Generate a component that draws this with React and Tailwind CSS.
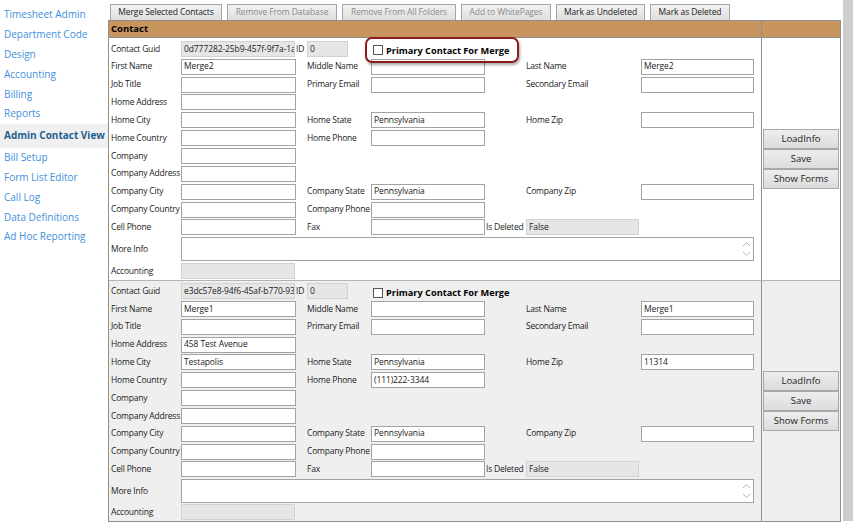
import React from 'react';

const navItems = [
  'Timesheet Admin',
  'Department Code',
  'Design',
  'Accounting',
  'Billing',
  'Reports',
  'Admin Contact View',
  'Bill Setup',
  'Form List Editor',
  'Call Log',
  'Data Definitions',
  'Ad Hoc Reporting',
];

const toolbar = [
  { label: 'Merge Selected Contacts', w: 'w-[112px]', on: true },
  { label: 'Remove From Database', w: 'w-[110px]', on: false },
  { label: 'Remove From All Folders', w: 'w-[114px]', on: false },
  { label: 'Add to WhitePages', w: 'w-[90px]', on: false },
  { label: 'Mark as Undeleted', w: 'w-[89px]', on: true },
  { label: 'Mark as Deleted', w: 'w-[80px]', on: true },
];

const contacts = [
  {
    guid: '0d777282-25b9-457f-9f7a-1a',
    first: 'Merge2',
    last: 'Merge2',
    address: '',
    city: '',
    zip: '',
    phone: '',
    bg: 'bg-white',
    pad: 'pt-[2px]',
    infoH: 'h-[26px]',
  },
  {
    guid: 'e3dc57e8-94f6-45af-b770-93',
    first: 'Merge1',
    last: 'Merge1',
    address: '458 Test Avenue',
    city: 'Testapolis',
    zip: '11314',
    phone: '(111)222-3344',
    bg: 'bg-[#efefef] border-t border-[#b4b4b4]',
    pad: 'pt-[1px]',
    infoH: 'h-[25px]',
  },
];

function Box({ value = '', w = 'w-[115px]', gray = false }) {
  return (
    <div
      className={`${w} shrink-0 h-[16px] border flex items-center px-[2px] overflow-hidden whitespace-nowrap text-[8.5px] tracking-[-0.1px] text-[#222] ${
        gray ? 'bg-[#e6e6e6] border-[#d2d2d2]' : 'bg-white border-[#a3a3a3]'
      }`}
    >
      {value}
    </div>
  );
}

function Label({ children, w }) {
  return (
    <div className={`${w} shrink-0 whitespace-nowrap text-[8.5px] tracking-[-0.2px] text-[#222]`}>{children}</div>
  );
}

function Row({ a, av, b, bv, c, cv, isDeleted = false }) {
  return (
    <div className="h-[17.85px] flex items-center">
      <Label w="w-[70px]">{a}</Label>
      <Box value={av} />
      <div className="w-[11px] shrink-0" />
      {b && (
        <>
          <Label w="w-[64px]">{b}</Label>
          <Box value={bv} w="w-[114px]" />
        </>
      )}
      {isDeleted && (
        <>
          <div className="w-[41px] shrink-0 pl-[1px] text-[8.5px] tracking-[-0.2px] text-[#222] whitespace-nowrap">
            Is Deleted
          </div>
          <Box value="False" w="w-[113px]" gray />
        </>
      )}
      {c && (
        <>
          <div className="w-[41px] shrink-0" />
          <Label w="w-[115px]">{c}</Label>
          <Box value={cv} w="w-[113px]" />
        </>
      )}
    </div>
  );
}

function ContactBlock({ data }) {
  return (
    <div className={`flex ${data.bg}`}>
      <div className={`w-[653px] border-r border-[#8f8f8f] pl-[2px] ${data.pad}`}>
        <div className="h-[17.85px] flex items-center">
          <Label w="w-[70px]">Contact Guid</Label>
          <Box value={data.guid} w="w-[114px]" gray />
          <div className="w-[12px] shrink-0 pl-[1px] text-[8.5px] text-[#222]">ID</div>
          <Box value="0" w="w-[41px]" gray />
          <div className="flex items-center ml-[25px] mt-[3px] gap-[3px]">
            <div className="w-[10px] h-[10px] border border-[#555] bg-white" />
            <span className="text-[9.2px] font-bold text-black whitespace-nowrap">Primary Contact For Merge</span>
          </div>
        </div>
        <Row a="First Name" av={data.first} b="Middle Name" bv="" c="Last Name" cv={data.last} />
        <Row a="Job Title" av="" b="Primary Email" bv="" c="Secondary Email" cv="" />
        <Row a="Home Address" av={data.address} />
        <Row a="Home City" av={data.city} b="Home State" bv="Pennsylvania" c="Home Zip" cv={data.zip} />
        <Row a="Home Country" av="" b="Home Phone" bv={data.phone} />
        <Row a="Company" av="" />
        <Row a="Company Address" av="" />
        <Row a="Company City" av="" b="Company State" bv="Pennsylvania" c="Company Zip" cv="" />
        <Row a="Company Country" av="" b="Company Phone" bv="" />
        <Row a="Cell Phone" av="" b="Fax" bv="" isDeleted />
        <div className={`${data.infoH} flex items-center`}>
          <Label w="w-[70px]">More Info</Label>
          <div className="w-[573px] h-[24px] border border-[#a3a3a3] bg-white flex justify-end items-center pr-[2px]">
            <svg width="9" height="20" viewBox="0 0 9 20" fill="none" stroke="#b5b5b5" strokeWidth="1">
              <path d="M1 7 L4.5 3.5 L8 7" />
              <path d="M1 13 L4.5 16.5 L8 13" />
            </svg>
          </div>
        </div>
        <div className="h-[17.85px] flex items-center">
          <Label w="w-[70px]">Accounting</Label>
          <Box value="" w="w-[114px]" gray />
        </div>
      </div>
      <div className="flex-1 flex flex-col justify-center px-[1px]">
        {['LoadInfo', 'Save', 'Show Forms'].map((t) => (
          <button
            key={t}
            className="h-[20px] border border-[#a8a8a8] bg-gradient-to-b from-[#ededed] to-[#dcdcdc] text-[9.5px] text-[#222]"
          >
            {t}
          </button>
        ))}
      </div>
    </div>
  );
}

export default function App() {
  return (
    <div className="w-[855px] h-[526px] bg-white flex overflow-hidden font-['Open_Sans','Noto_Sans',sans-serif]">
      <nav className="w-[108px] shrink-0 pt-[5px]">
        {navItems.map((item) =>
          item === 'Admin Contact View' ? (
            <div key={item} className="h-[24px] bg-[#f0f0f0] flex items-center pl-[4px]">
              <span className="text-[10px] font-bold text-[#1f5f8f] whitespace-nowrap">{item}</span>
            </div>
          ) : (
            <div key={item} className="h-[19.8px] flex items-center pl-[4px]">
              <span className="text-[10px] text-[#3f8fdc] whitespace-nowrap">{item}</span>
            </div>
          )
        )}
      </nav>

      <div className="relative flex">
        <div className="w-[733px]">
          <div className="h-[20px] flex items-end gap-[5px] pl-[2px]">
            {toolbar.map((b) => (
              <button
                key={b.label}
                className={`${b.w} h-[16px] border border-b-0 border-[#a5a5a5] bg-gradient-to-b from-[#f2f2f2] to-[#dedede] text-[8.5px] tracking-[-0.1px] whitespace-nowrap ${
                  b.on ? 'text-[#222]' : 'text-[#8a8a8a]'
                }`}
              >
                {b.label}
              </button>
            ))}
          </div>
          <div className="border-l border-r border-b border-[#8f8f8f]">
            <div className="flex h-[18px] bg-[#c8955f] border-t border-b border-[#8f8f8f]">
              <div className="w-[653px] border-r border-[#8f8f8f] pl-[2px] flex items-center text-[9.5px] font-bold text-black">
                Contact
              </div>
              <div className="flex-1" />
            </div>
            {contacts.map((c) => (
              <ContactBlock key={c.guid} data={c} />
            ))}
          </div>
        </div>
        <div className="ml-[2px] w-[10px] h-[521px] bg-[#cdcdcd]" />

        <div className="absolute left-[257px] top-[37px] w-[154px] h-[26px] rounded-[7px] border-[2.5px] border-[#8c1c1c] shadow-[1px_2px_3px_rgba(0,0,0,0.35)]" />
      </div>
    </div>
  );
}
